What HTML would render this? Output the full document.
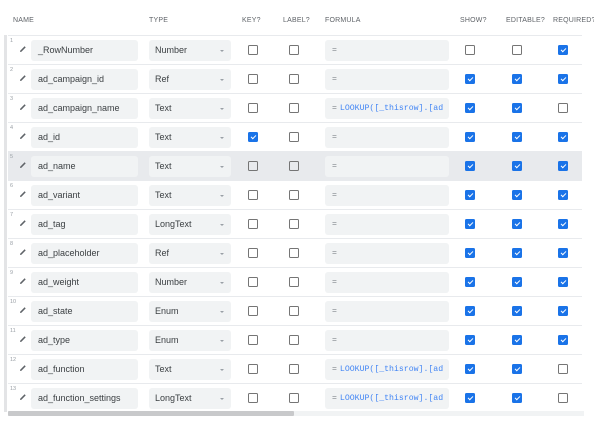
<!DOCTYPE html>
<html><head><meta charset="utf-8"><style>
*{box-sizing:border-box;margin:0;padding:0}
body{width:600px;height:426px;background:#fff;font-family:"Liberation Sans",Arial,sans-serif;position:relative;overflow:hidden;color:#3c4043}
.h{position:absolute;top:17px;font-size:7px;color:#5f6368;letter-spacing:.2px;white-space:nowrap}
.row{position:absolute;left:8px;width:574px;height:29px;border-top:1px solid #e8eaed}
.row.hl{background:#e8eaed}
.n{position:absolute;left:2px;top:2px;font-size:5.5px;color:#9aa0a6}
.pen{position:absolute;left:11px;top:9px;width:8px;height:8px}
.in{position:absolute;top:4px;height:21px;background:#f1f3f4;border-radius:3px;font-size:9px;line-height:21px;padding-left:7px;color:#3c4043;white-space:nowrap;overflow:hidden}
.nm{left:23px;width:107px}
.ty{left:141px;width:82px;padding-left:6px}
.ty:after{content:"";position:absolute;right:7px;top:10px;border-left:2.5px solid transparent;border-right:2.5px solid transparent;border-top:2.5px solid #9aa0a6}
.fo{left:317px;width:124px;font-family:"Liberation Mono",monospace;font-size:8.2px;color:#4285f4;padding-left:7px}
.fo b{font-weight:normal;color:#80868b;margin-right:3px}
.cb{position:absolute;top:9px;width:10px;height:10px;border:1.2px solid #757575;border-radius:1.5px}
.cb.on{background:#1a73e8;border-color:#1a73e8}
.cb.on:after{content:"";position:absolute;width:4px;height:2px;border-left:1.2px solid #fff;border-bottom:1.2px solid #fff;transform:rotate(-45deg);top:2px;left:1.5px}
.k{left:240px}.l{left:281px}.s{left:457px}.e{left:504px}.r{left:550px}
</style></head><body>
<div class="h" style="left:13px">NAME</div>
<div class="h" style="left:149px">TYPE</div>
<div class="h" style="left:242px">KEY?</div>
<div class="h" style="left:283px">LABEL?</div>
<div class="h" style="left:325px">FORMULA</div>
<div class="h" style="left:460px">SHOW?</div>
<div class="h" style="left:506px">EDITABLE?</div>
<div class="h" style="left:553px;width:41px;overflow:hidden">REQUIRED?</div>
<div style="position:absolute;left:4px;top:35px;width:3px;height:377px;background:#e3e4e6"></div>

<svg width="0" height="0" style="position:absolute"><defs><symbol id="p" viewBox="0 0 8 8"><path d="M1 7 L1.3 5.6 L5.6 1.3 L6.7 2.4 L2.4 6.7 Z" fill="#5f6368"/></symbol></defs></svg>

<div class="row" style="top:35px"><span class="n">1</span><svg class="pen"><use href="#p"/></svg><div class="in nm">_RowNumber</div><div class="in ty">Number</div><div class="cb k"></div><div class="cb l"></div><div class="in fo"><b>=</b></div><div class="cb s"></div><div class="cb e"></div><div class="cb r on"></div></div>
<div class="row" style="top:64px"><span class="n">2</span><svg class="pen"><use href="#p"/></svg><div class="in nm">ad_campaign_id</div><div class="in ty">Ref</div><div class="cb k"></div><div class="cb l"></div><div class="in fo"><b>=</b></div><div class="cb s on"></div><div class="cb e on"></div><div class="cb r on"></div></div>
<div class="row" style="top:93px"><span class="n">3</span><svg class="pen"><use href="#p"/></svg><div class="in nm">ad_campaign_name</div><div class="in ty">Text</div><div class="cb k"></div><div class="cb l"></div><div class="in fo"><b>=</b>LOOKUP([_thisrow].[ad</div><div class="cb s on"></div><div class="cb e on"></div><div class="cb r"></div></div>
<div class="row" style="top:122px"><span class="n">4</span><svg class="pen"><use href="#p"/></svg><div class="in nm">ad_id</div><div class="in ty">Text</div><div class="cb k on"></div><div class="cb l"></div><div class="in fo"><b>=</b></div><div class="cb s on"></div><div class="cb e on"></div><div class="cb r on"></div></div>
<div class="row hl" style="top:151px"><span class="n">5</span><svg class="pen"><use href="#p"/></svg><div class="in nm">ad_name</div><div class="in ty">Text</div><div class="cb k"></div><div class="cb l"></div><div class="in fo"><b>=</b></div><div class="cb s on"></div><div class="cb e on"></div><div class="cb r on"></div></div>
<div class="row" style="top:180px"><span class="n">6</span><svg class="pen"><use href="#p"/></svg><div class="in nm">ad_variant</div><div class="in ty">Text</div><div class="cb k"></div><div class="cb l"></div><div class="in fo"><b>=</b></div><div class="cb s on"></div><div class="cb e on"></div><div class="cb r on"></div></div>
<div class="row" style="top:209px"><span class="n">7</span><svg class="pen"><use href="#p"/></svg><div class="in nm">ad_tag</div><div class="in ty">LongText</div><div class="cb k"></div><div class="cb l"></div><div class="in fo"><b>=</b></div><div class="cb s on"></div><div class="cb e on"></div><div class="cb r on"></div></div>
<div class="row" style="top:238px"><span class="n">8</span><svg class="pen"><use href="#p"/></svg><div class="in nm">ad_placeholder</div><div class="in ty">Ref</div><div class="cb k"></div><div class="cb l"></div><div class="in fo"><b>=</b></div><div class="cb s on"></div><div class="cb e on"></div><div class="cb r on"></div></div>
<div class="row" style="top:267px"><span class="n">9</span><svg class="pen"><use href="#p"/></svg><div class="in nm">ad_weight</div><div class="in ty">Number</div><div class="cb k"></div><div class="cb l"></div><div class="in fo"><b>=</b></div><div class="cb s on"></div><div class="cb e on"></div><div class="cb r on"></div></div>
<div class="row" style="top:296px"><span class="n">10</span><svg class="pen"><use href="#p"/></svg><div class="in nm">ad_state</div><div class="in ty">Enum</div><div class="cb k"></div><div class="cb l"></div><div class="in fo"><b>=</b></div><div class="cb s on"></div><div class="cb e on"></div><div class="cb r on"></div></div>
<div class="row" style="top:325px"><span class="n">11</span><svg class="pen"><use href="#p"/></svg><div class="in nm">ad_type</div><div class="in ty">Enum</div><div class="cb k"></div><div class="cb l"></div><div class="in fo"><b>=</b></div><div class="cb s on"></div><div class="cb e on"></div><div class="cb r on"></div></div>
<div class="row" style="top:354px"><span class="n">12</span><svg class="pen"><use href="#p"/></svg><div class="in nm">ad_function</div><div class="in ty">Text</div><div class="cb k"></div><div class="cb l"></div><div class="in fo"><b>=</b>LOOKUP([_thisrow].[ad</div><div class="cb s on"></div><div class="cb e on"></div><div class="cb r"></div></div>
<div class="row" style="top:383px"><span class="n">13</span><svg class="pen"><use href="#p"/></svg><div class="in nm">ad_function_settings</div><div class="in ty">LongText</div><div class="cb k"></div><div class="cb l"></div><div class="in fo"><b>=</b>LOOKUP([_thisrow].[ad</div><div class="cb s on"></div><div class="cb e on"></div><div class="cb r"></div></div>

<div style="position:absolute;left:8px;top:411px;width:576px;height:5px;background:#f1f3f4"></div>
<div style="position:absolute;left:8px;top:411px;width:286px;height:5px;background:#c8c9cb;border-radius:1px"></div>
</body></html>
